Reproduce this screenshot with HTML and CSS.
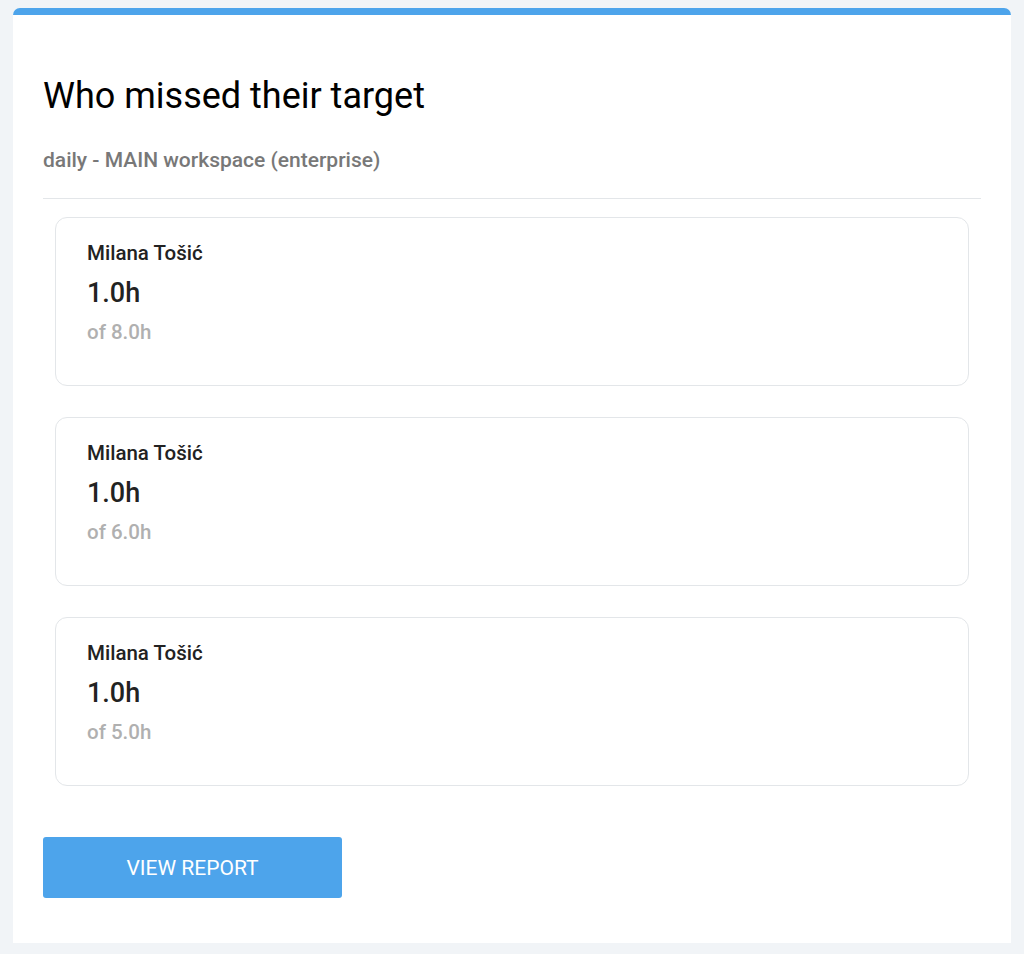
FILE: index.html
```html
<!DOCTYPE html>
<html lang="en">
<head>
<meta charset="utf-8">
<title>Who missed their target</title>
<link rel="stylesheet" href="styles.css">
</head>
<body>
<div class="page">
  <div class="panel">
    <h1 class="title">Who missed their target</h1>
    <p class="subtitle">daily - MAIN workspace (enterprise)</p>
    <hr class="divider">
    <div class="cards">
      <div class="card">
        <div class="name">Milana Tošić</div>
        <div class="hours">1.0h</div>
        <div class="target">of 8.0h</div>
      </div>
      <div class="card">
        <div class="name">Milana Tošić</div>
        <div class="hours">1.0h</div>
        <div class="target">of 6.0h</div>
      </div>
      <div class="card">
        <div class="name">Milana Tošić</div>
        <div class="hours">1.0h</div>
        <div class="target">of 5.0h</div>
      </div>
    </div>
    <a class="button" href="#">VIEW REPORT</a>
  </div>
</div>
</body>
</html>
```

FILE: styles.css
```css
html, body {
  margin: 0;
  padding: 0;
  background: #f1f4f7;
  font-family: Roboto, "Liberation Sans", Arial, sans-serif;
}

.page {
  padding: 8px 13px 11px 13px;
}

.panel {
  background: #ffffff;
  border-top: 7px solid #4da4eb;
  border-radius: 7px 7px 0 0;
  padding: 0 30px 45px 30px;
}

.title {
  margin: 0;
  padding-top: 61px;
  font-size: 36px;
  line-height: 40px;
  font-weight: 400;
  color: #000000;
}

.subtitle {
  margin: 32px 0 0 0;
  font-size: 21px;
  line-height: 24px;
  font-weight: 500;
  color: #787878;
}

.divider {
  margin: 26px 0 0 0;
  border: 0;
  border-top: 1px solid #e3e6e9;
  height: 0;
}

.cards {
  display: flex;
  flex-direction: column;
  gap: 31px;
  margin: 18px 12px 0 12px;
}

.card {
  border: 1px solid #e3e6e9;
  border-radius: 12px;
  height: 167px;
  padding: 0 31px;
  display: flex;
  flex-direction: column;
  box-sizing: content-box;
}

.name {
  margin-top: 23px;
  font-size: 20.5px;
  line-height: 24px;
  font-weight: 500;
  color: #222222;
}

.hours {
  margin-top: 13px;
  font-size: 27px;
  line-height: 30px;
  font-weight: 500;
  color: #222222;
}

.target {
  margin-top: 12px;
  font-size: 20.5px;
  line-height: 24px;
  font-weight: 500;
  color: #b0b0b0;
}

.button {
  display: flex;
  align-items: center;
  justify-content: center;
  margin-top: 51px;
  width: 299px;
  height: 61px;
  background: #4da4eb;
  border-radius: 3px;
  color: #ffffff;
  text-decoration: none;
  font-size: 21px;
  font-weight: 400;
}
```
